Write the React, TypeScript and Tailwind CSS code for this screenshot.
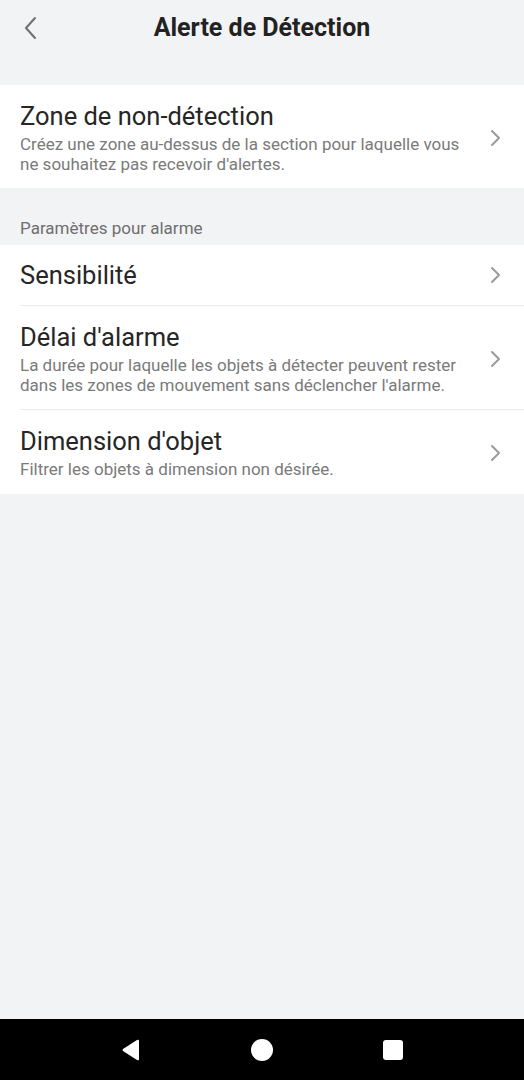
import React from "react";

const Chevron: React.FC = () => (
  <svg width="12" height="18" viewBox="0 0 12 18" className="shrink-0">
    <path d="M3 2 L10 9 L3 16" fill="none" stroke="#9b9b9b" strokeWidth="2" strokeLinecap="round" strokeLinejoin="round" />
  </svg>
);

type RowProps = {
  title: string;
  desc?: string;
  divider?: boolean;
  bottom?: string;
};

const Row: React.FC<RowProps> = ({ title, desc, divider }) => (
  <div className="pl-[20px]">
    <div
      className={
        "flex items-center pr-[23px] " +
        (desc ? "pt-[16px] pb-[14px]" : "h-[61px]") +
        (divider ? " border-b border-[#ebebeb]" : "")
      }
    >
      <div className="flex-1 pr-[18px]">
        <div className="text-[25.5px] leading-[30px] text-[#262626]">{title}</div>
        {desc && (
          <div className="mt-[3px] text-[17px] leading-[20px] text-[#7a7a7a]">{desc}</div>
        )}
      </div>
      <Chevron />
    </div>
  </div>
);

export default function App() {
  return (
    <div
      className="min-h-screen flex flex-col bg-[#f2f3f5]"
      style={{ fontFamily: "Roboto, 'Liberation Sans', sans-serif" }}
    >
      <header className="relative h-[56px] flex items-center justify-center">
        <svg width="16" height="24" viewBox="0 0 16 24" className="absolute left-[22px] top-[16px]">
          <path d="M13 2 L4 12 L13 22" fill="none" stroke="#6f6f6f" strokeWidth="2" strokeLinecap="round" strokeLinejoin="round" />
        </svg>
        <h1 className="text-[25px] font-bold text-[#222222]">Alerte de Détection</h1>
      </header>

      <div className="mt-[29px] bg-white">
        <Row
          title="Zone de non-détection"
          desc="Créez une zone au-dessus de la section pour laquelle vous ne souhaitez pas recevoir d'alertes."
        />
      </div>

      <div className="pl-[20px] pt-[30px] pb-[7px] text-[17px] leading-[20px] text-[#6e6e6e]">
        Paramètres pour alarme
      </div>

      <div className="bg-white">
        <Row title="Sensibilité" divider />
        <Row
          title="Délai d'alarme"
          desc="La durée pour laquelle les objets à détecter peuvent rester dans les zones de mouvement sans déclencher l'alarme."
          divider
        />
        <div className="pl-[20px]">
          <div className="flex items-center pr-[23px] pt-[16px] pb-[15px]">
            <div className="flex-1 pr-[18px]">
              <div className="text-[25.5px] leading-[30px] text-[#262626]">Dimension d'objet</div>
              <div className="mt-[3px] text-[17px] leading-[20px] text-[#7a7a7a]">
                Filtrer les objets à dimension non désirée.
              </div>
            </div>
            <Chevron />
          </div>
        </div>
      </div>

      <div className="flex-1" />

      <nav className="h-[61px] bg-black flex items-center justify-center gap-[110px]">
        <svg width="20" height="22" viewBox="0 0 20 22">
          <path d="M18 2 L18 20 Q18 22 16 21 L2 12 Q1 11 2 10 L16 1 Q18 0 18 2 Z" fill="white" />
        </svg>
        <div className="w-[22px] h-[22px] rounded-full bg-white" />
        <div className="w-[20px] h-[20px] rounded-[3px] bg-white" />
      </nav>
    </div>
  );
}
